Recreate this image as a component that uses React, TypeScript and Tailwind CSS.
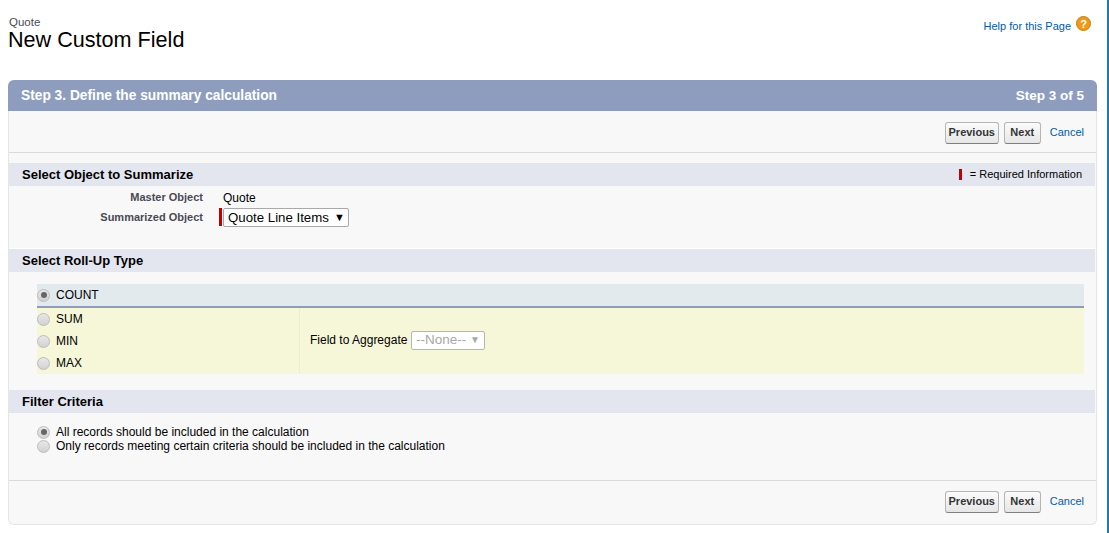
import React from 'react';

const Radio: React.FC<{ checked?: boolean }> = ({ checked }) => (
  <span className="w-[13px] h-[13px] rounded-full border border-[#bcbcbc] bg-gradient-to-b from-[#e8e8e8] to-[#d2d2d2] flex items-center justify-center shrink-0">
    {checked && <span className="w-[6px] h-[6px] rounded-full bg-[#666666]" />}
  </span>
);

const NavButtons: React.FC = () => (
  <div className="flex items-center justify-end pr-[13px]">
    <button className="h-[22px] w-[54px] rounded-[3px] border border-[#b5b5b5] border-b-[#7f7f7f] bg-gradient-to-b from-[#fbfbfb] to-[#e6e6e6] text-[11px] leading-[18px] pb-[2px] font-bold text-[#333435]">Previous</button>
    <button className="ml-[5px] h-[22px] w-[37px] rounded-[3px] border border-[#b5b5b5] border-b-[#7f7f7f] bg-gradient-to-b from-[#fbfbfb] to-[#e6e6e6] text-[11px] leading-[18px] pb-[2px] font-bold text-[#333435]">Next</button>
    <span className="ml-[8px] text-[11px] text-[#015ba7] translate-x-[1px] -translate-y-[1px]">Cancel</span>
  </div>
);

const SectionBar: React.FC<{ title: string; children?: React.ReactNode }> = ({ title, children }) => (
  <div className="h-[23px] bg-[#e3e6ef] flex items-center justify-between pl-[13px] pr-[13px] mr-[1px] shrink-0">
    <h3 className="text-[13px] font-bold text-black">{title}</h3>
    {children}
  </div>
);

export default function App() {
  return (
    <div className="relative w-[1109px] h-[533px] bg-white overflow-hidden font-['Liberation_Sans',Arial,sans-serif] text-black">
      {/* page edge */}
      <div className="absolute right-0 top-0 bottom-0 w-[2px] bg-[#1b7fa8]" />

      <div className="flex flex-col pl-[8px] pr-[12px]">
        {/* Page title */}
        <div className="h-[80px] flex justify-between">
          <div className="pt-[16px]">
            <p className="text-[11.5px] leading-[12px] text-[#4a4a56] ml-[1px]">Quote</p>
            <h1 className="text-[21.6px] leading-[24px] text-black">New Custom Field</h1>
          </div>
          <div className="flex items-start pt-[16px] pr-[6px]">
            <span className="text-[11px] leading-[20px] text-[#015ba7]">Help for this Page</span>
            <span className="ml-[5px] w-[15px] h-[15px] rounded-full bg-[#ec9a17] border border-[#c97f10] text-white text-[11px] font-bold leading-[14px] text-center">?</span>
          </div>
        </div>

        {/* Step panel */}
        <div className="h-[445px] rounded-[6px] border border-t-0 border-[#e5e5e5] bg-[#f8f8f8] flex flex-col">
          <div className="h-[31px] -mx-[1px] rounded-t-[6px] bg-[#8e9dbe] flex items-center justify-between pl-[13px] pr-[13px] text-white font-bold shrink-0">
            <span className="text-[13.75px] translate-y-[1px]">Step 3. Define the summary calculation</span>
            <span className="text-[13.5px] translate-y-[1px]">Step 3 of 5</span>
          </div>

          <div className="h-[42px] pt-[11px] border-b border-[#dbdbdb] shrink-0">
            <NavButtons />
          </div>

          <div className="mt-[10px]">
            <SectionBar title="Select Object to Summarize">
              <div className="flex items-center text-[11px] text-black">
                <span className="w-[3px] h-[11px] bg-[#c00000] mr-[8px]" />
                <span>= Required Information</span>
              </div>
            </SectionBar>
          </div>

          {/* Object fields */}
          <div className="h-[63px] pt-[4px] border-b border-white shrink-0">
            <div className="flex items-center h-[14px]">
              <span className="w-[194px] text-right text-[11px] font-bold text-[#4a4a56]">Master Object</span>
              <span className="ml-[20px] text-[12px] text-black translate-y-[1px]">Quote</span>
            </div>
            <div className="flex items-start mt-[4px]">
              <span className="w-[194px] text-right text-[11px] font-bold text-[#4a4a56] leading-[18px]">Summarized Object</span>
              <span className="ml-[16px] w-[3px] h-[18px] bg-[#c00000]" />
              <span className="ml-[1px] w-[126px] h-[19px] border border-[#a9a9a9] rounded-[2px] bg-white flex items-center justify-between pl-[4px] pr-[3px] text-[13.25px]">
                Quote Line Items
                <span className="text-[11px] leading-none">▼</span>
              </span>
            </div>
          </div>

          <SectionBar title="Select Roll-Up Type" />

          {/* Roll-up types */}
          <div className="h-[118px] pt-[12px] pl-[28px] pr-[12px] shrink-0">
            <div className="h-[24px] bg-[#e3eaee] border-b-2 border-[#8e9dbe] flex items-center text-[12px]">
              <Radio checked />
              <span className="ml-[6px]">COUNT</span>
            </div>
            <div className="h-[66px] bg-[#f6f6d8] flex">
              <div className="w-[263px] border-r border-[#ececd0] flex flex-col justify-center gap-[9px] text-[12px]">
                <label className="flex items-center h-[13px]"><Radio /><span className="ml-[6px]">SUM</span></label>
                <label className="flex items-center h-[13px]"><Radio /><span className="ml-[6px]">MIN</span></label>
                <label className="flex items-center h-[13px]"><Radio /><span className="ml-[6px]">MAX</span></label>
              </div>
              <div className="flex items-center pl-[10px] pb-[2px] text-[12px]">
                <span className="w-[98px] whitespace-nowrap">Field to Aggregate</span>
                <span className="ml-[3px] w-[74px] h-[19px] border border-[#b5b5b5] rounded-[2px] bg-white flex items-center justify-between pl-[4px] pr-[4px] text-[13.5px] text-[#a8a8a8]">
                  --None--
                  <span className="text-[10px] leading-none">▼</span>
                </span>
              </div>
            </div>
          </div>

          <SectionBar title="Filter Criteria" />

          {/* Filter options */}
          <div className="h-[68px] pt-[12px] pl-[28px] border-b border-[#dbdbdb] text-[12px] shrink-0">
            <label className="flex items-center h-[14px]"><Radio checked /><span className="ml-[6px]">All records should be included in the calculation</span></label>
            <label className="flex items-center h-[14px]"><Radio /><span className="ml-[6px]">Only records meeting certain criteria should be included in the calculation</span></label>
          </div>

          <div className="pt-[10px]">
            <NavButtons />
          </div>
        </div>
      </div>
    </div>
  );
}
